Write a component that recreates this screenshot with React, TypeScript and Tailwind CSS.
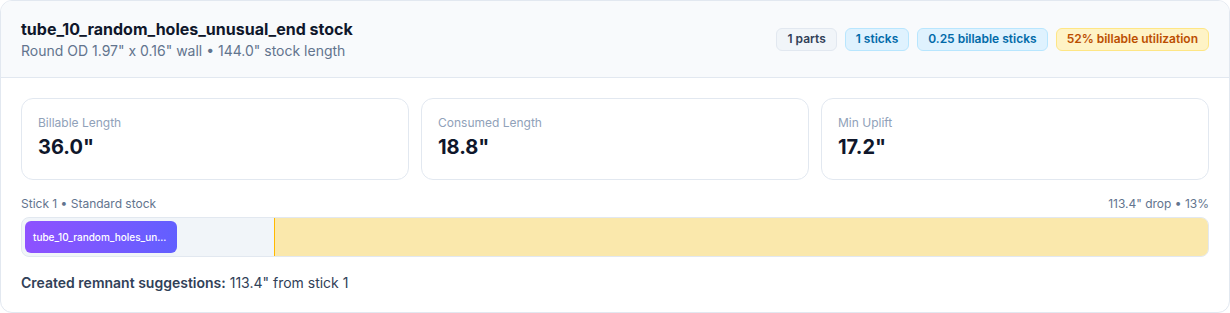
import React from 'react';

const badges = [
  { label: '1 parts', cls: 'bg-slate-100 border-slate-200 text-slate-700' },
  { label: '1 sticks', cls: 'bg-sky-100 border-sky-200 text-sky-700' },
  { label: '0.25 billable sticks', cls: 'bg-sky-100 border-sky-200 text-sky-700' },
  { label: '52% billable utilization', cls: 'bg-amber-100 border-amber-200 text-amber-700' },
];

const stats = [
  { label: 'Billable Length', value: '36.0"' },
  { label: 'Consumed Length', value: '18.8"' },
  { label: 'Min Uplift', value: '17.2"' },
];

const STOCK = 144;
const PART = 18.8;
const DROP = 113.4;

export default function App() {
  return (
    <div className="w-[1230px] h-[313px] bg-white font-['Inter',sans-serif]">
      <div className="w-[1230px] h-[313px] rounded-xl border border-slate-200 overflow-hidden bg-white">
        {/* Header */}
        <div className="flex items-center justify-between bg-slate-50 border-b border-slate-200 px-5 py-4">
          <div>
            <div className="text-base font-bold text-slate-900 leading-6">tube_10_random_holes_unusual_end stock</div>
            <div className="text-sm text-slate-500 leading-5">Round OD 1.97" x 0.16" wall • 144.0" stock length</div>
          </div>
          <div className="flex items-center gap-2">
            {badges.map((b) => (
              <span
                key={b.label}
                className={`inline-flex items-center h-[23px] px-2.5 rounded-md border text-xs font-semibold ${b.cls}`}
              >
                {b.label}
              </span>
            ))}
          </div>
        </div>

        {/* Body */}
        <div className="p-5">
          <div className="grid grid-cols-3 gap-3">
            {stats.map((s) => (
              <div key={s.label} className="rounded-xl border border-slate-200 bg-white px-4 py-4">
                <div className="text-xs text-slate-400 leading-4">{s.label}</div>
                <div className="text-xl font-bold text-slate-900 leading-8">{s.value}</div>
              </div>
            ))}
          </div>

          <div className="mt-4 flex items-center justify-between text-xs leading-4 text-slate-500">
            <span>Stick 1 • Standard stock</span>
            <span>113.4" drop • 13%</span>
          </div>

          <div className="relative mt-[5px] h-10 rounded-lg border border-slate-200 bg-slate-100 overflow-hidden">
            <div
              className="absolute top-0 bottom-0 right-0 bg-[#fae8ac] border-l border-amber-400"
              style={{ width: `${(DROP / STOCK) * 100}%` }}
            />
            <div
              className="absolute top-[3px] bottom-[3px] left-[3px] flex items-center rounded-md bg-gradient-to-r from-violet-500 to-indigo-500 px-2"
              style={{ width: `calc(${(PART / STOCK) * 100}% - 3px)` }}
            >
              <span className="whitespace-nowrap text-[10px] font-medium text-white">tube_10_random_holes_un...</span>
            </div>
          </div>

          <div className="mt-4 text-sm leading-5 text-slate-700">
            <span className="font-semibold">Created remnant suggestions:</span> 113.4" from stick 1
          </div>
        </div>
      </div>
    </div>
  );
}
